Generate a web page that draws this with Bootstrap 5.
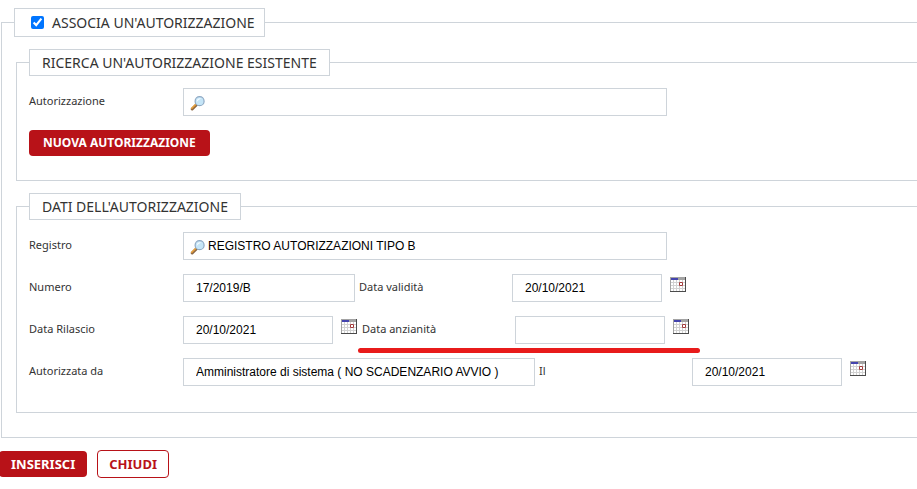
<!DOCTYPE html>
<html lang="it">
<head>
<meta charset="utf-8">
<meta name="viewport" content="width=device-width, initial-scale=1">
<title>Associa un'autorizzazione</title>
<link href="https://cdn.jsdelivr.net/npm/bootstrap@5.3.0/dist/css/bootstrap.min.css" rel="stylesheet">
<style>
  body { font-family: Tahoma, "Noto Sans", sans-serif; font-size: 11px; line-height: 26px; color: #333; background: #fff; }
  .frame { border: 1px solid #ced4da; border-right: 0; padding: 12px 0 24px 12px; }
  .frame > legend { float: none; width: auto; margin: 0; padding: 0 12px; border: 1px solid #ced4da; font-size: 14px; line-height: 25px; color: #333; }
  .frame-outer { margin: 8px 0 0 1px; padding-left: 14px; }
  .frame-outer > legend { margin-left: -2px; padding: 0 9px 0 16px; line-height: 27px; }
  .frame-outer > .frame + .frame { margin-top: 12px; padding-bottom: 26px; }
  .rows { row-gap: 14px; }
  .lbl-first { width: 154px; }
  .lbl-next { width: 153px; }
  .form-control { height: 28px; padding: 0 12px; border-radius: 0; border-color: #ced4da; font-family: "Liberation Sans", Arial, sans-serif; font-size: 12px; line-height: 26px; color: #000; }
  .w-date { width: 150px; }
  .w-num { width: 172px; }
  .w-user { width: 352px; }
  .w-search { width: 484px; }
  .w-search .form-control { padding-left: 24px; }
  .icon-btn { display: block; padding: 0; border: 0; background: none; line-height: 0; text-align: left; }
  .cal { width: 17px; height: 15px; margin: 3px 0 0 4px; }
  .lens { position: absolute; left: 7px; top: 7px; }
  .btn { --bs-btn-font-size: 13px; --bs-btn-font-weight: 700; --bs-btn-padding-y: 0; --bs-btn-padding-x: 12px; --bs-btn-line-height: 26px; --bs-btn-border-radius: 4px; }
  .btn-main { --bs-btn-color: #fff; --bs-btn-bg: #b81218; --bs-btn-hover-color: #fff; --bs-btn-hover-bg: #960e13; --bs-btn-border-width: 0; }
  .btn-new { --bs-btn-font-size: 12px; --bs-btn-padding-x: 14px; }
  .btn-alt { --bs-btn-padding-x: 11px; --bs-btn-color: #b81218; --bs-btn-bg: #fff; --bs-btn-border-color: #b81218; --bs-btn-hover-color: #fff; --bs-btn-hover-bg: #b81218; }
  .actions { gap: 10px; margin: 12px 0 0 -1px; }
  .tick { width: 13px; height: 13px; margin: 0; accent-color: #0075ff; }
  .marked::after { content: ""; position: absolute; left: -4px; right: -10px; bottom: -9px; height: 5px; border-radius: 3px; background: #e81b1b; }
</style>
<script src="https://cdn.jsdelivr.net/npm/bootstrap@5.3.0/dist/js/bootstrap.bundle.min.js"></script>
</head>
<body>
<svg class="d-none" aria-hidden="true">
  <symbol id="calendar" viewBox="0 0 16 15">
    <path fill="#fff" d="M0 0h16v15H0z"/>
    <path fill="#d2d2d2" d="M1 5h14v1H1zM1 8h14v1H1zM1 11h14v1H1zM3 3h1v11H3zM6 3h1v11H6zM9 3h1v11H9zM12 3h1v11h-1z"/>
    <path fill="#a3a3a3" d="M0 0h16v3H0zM0 0h1v15H0z"/>
    <path fill="#4444ae" d="M1 1h7v2H1z"/>
    <path fill="#4b4b4b" d="M15 0h1v15h-1zM0 14h16v1H0z"/>
    <path fill="#fff" stroke="#a33c3c" d="M9.500 5.500h3v3h-3z"/>
  </symbol>
  <symbol id="magnifier" viewBox="0 0 16 16">
    <path d="M2.200 14 7 9.200" stroke="#8d6844" stroke-width="3" stroke-linecap="round"/>
    <path d="M1.800 13.300 6.400 8.700" stroke="#e9a13b" stroke-width="1.600" stroke-linecap="round"/>
    <circle cx="9.600" cy="6.200" r="4.500" fill="#c5e5f7" stroke="#8fa9c4" stroke-width="1.200"/>
    <path d="M6.800 6a3 3 0 0 1 4.800-2.200C10 4 8 5 6.800 7z" fill="#f4fbff"/>
  </symbol>
</svg>
<main>
  <form>
    <fieldset class="frame frame-outer">
      <legend><span class="d-flex align-items-center"><input class="tick" type="checkbox" id="associa" checked><label for="associa" class="ps-2">ASSOCIA UN'AUTORIZZAZIONE</label></span></legend>
      <fieldset class="frame">
        <legend>RICERCA UN'AUTORIZZAZIONE ESISTENTE</legend>
        <div class="rows d-flex flex-column align-items-start">
          <div class="d-flex">
            <label class="lbl-first" for="autorizzazione">Autorizzazione</label>
            <div class="w-search position-relative">
              <input class="form-control" type="text" id="autorizzazione">
              <button class="icon-btn lens" type="button" aria-label="Cerca autorizzazione"><svg width="16" height="16"><use href="#magnifier"/></svg></button>
            </div>
          </div>
          <button class="btn btn-main btn-new" type="button">NUOVA AUTORIZZAZIONE</button>
        </div>
      </fieldset>
      <fieldset class="frame">
        <legend>DATI DELL'AUTORIZZAZIONE</legend>
        <div class="rows d-flex flex-column">
          <div class="d-flex">
            <label class="lbl-first" for="registro">Registro</label>
            <div class="w-search position-relative">
              <input class="form-control" type="text" id="registro" value="REGISTRO AUTORIZZAZIONI TIPO B">
              <button class="icon-btn lens" type="button" aria-label="Cerca registro"><svg width="16" height="16"><use href="#magnifier"/></svg></button>
            </div>
          </div>
          <div class="d-flex flex-wrap">
            <div class="d-flex">
              <label class="lbl-first" for="numero">Numero</label>
              <input class="form-control w-num me-1" type="text" id="numero" value="17/2019/B">
            </div>
            <div class="d-flex">
              <label class="lbl-next" for="validita">Data validità</label>
              <input class="form-control w-date me-1" type="text" id="validita" value="20/10/2021">
              <button class="icon-btn cal" type="button" aria-label="Scegli data validità"><svg width="16" height="15"><use href="#calendar"/></svg></button>
            </div>
          </div>
          <div class="d-flex flex-wrap">
            <div class="d-flex me-1">
              <label class="lbl-first" for="rilascio">Data Rilascio</label>
              <input class="form-control w-date me-1" type="text" id="rilascio" value="20/10/2021">
              <button class="icon-btn cal" type="button" aria-label="Scegli data rilascio"><svg width="16" height="15"><use href="#calendar"/></svg></button>
            </div>
            <div class="marked d-flex position-relative">
              <label class="lbl-next" for="anzianita">Data anzianità</label>
              <input class="form-control w-date me-1" type="text" id="anzianita">
              <button class="icon-btn cal" type="button" aria-label="Scegli data anzianità"><svg width="16" height="15"><use href="#calendar"/></svg></button>
            </div>
          </div>
          <div class="d-flex flex-wrap">
            <div class="d-flex">
              <label class="lbl-first" for="utente">Autorizzata da</label>
              <input class="form-control w-user me-1" type="text" id="utente" value="Amministratore di sistema ( NO SCADENZARIO AVVIO )">
            </div>
            <div class="d-flex">
              <label class="lbl-next" for="il">Il</label>
              <input class="form-control w-date me-1" type="text" id="il" value="20/10/2021">
              <button class="icon-btn cal" type="button" aria-label="Scegli data autorizzazione"><svg width="16" height="15"><use href="#calendar"/></svg></button>
            </div>
          </div>
        </div>
      </fieldset>
    </fieldset>
    <div class="actions d-flex align-items-center">
      <button class="btn btn-main" type="submit">INSERISCI</button>
      <button class="btn btn-alt" type="button">CHIUDI</button>
    </div>
  </form>
</main>
</body>
</html>
